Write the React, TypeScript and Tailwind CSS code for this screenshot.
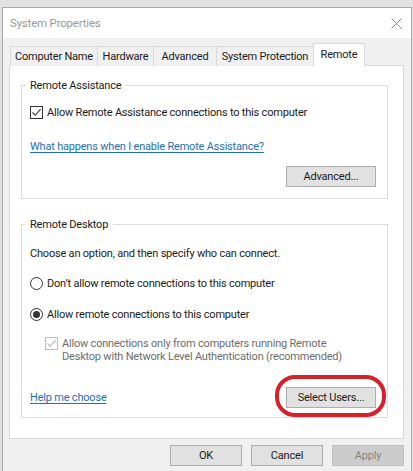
function CheckBox({ checked, disabled }: { checked?: boolean; disabled?: boolean }) {
  return (
    <span
      className={
        'flex items-center justify-center w-[13px] h-[13px] shrink-0 border bg-white ' +
        (disabled ? 'border-[#bcbcbc]' : 'border-[#333333]')
      }
    >
      {checked && (
        <svg width="11" height="11" viewBox="0 0 11 11">
          <path
            d="M1.5 5.5 L4.2 8.3 L9.6 2.2"
            fill="none"
            stroke={disabled ? '#b4b4b4' : '#333333'}
            strokeWidth="1.1"
          />
        </svg>
      )}
    </span>
  )
}

function Radio({ checked }: { checked?: boolean }) {
  return (
    <span className="flex items-center justify-center w-[13px] h-[13px] shrink-0 rounded-full border border-[#333333] bg-white">
      {checked && <span className="w-[7px] h-[7px] rounded-full bg-[#333333]" />}
    </span>
  )
}

function Button({ label, disabled, width = 'w-[90px]' }: { label: string; disabled?: boolean; width?: string }) {
  return (
    <div
      className={
        'h-[21px] flex items-center justify-center border ' +
        width +
        (disabled
          ? ' bg-[#cccccc] border-[#bfbfbf] text-[#838383]'
          : ' bg-[#e1e1e1] border-[#adadad] text-[#1a1a1a]')
      }
    >
      {label}
    </div>
  )
}

const tabs = [
  { label: 'Computer Name', w: 'w-[88px]' },
  { label: 'Hardware', w: 'w-[57px]' },
  { label: 'Advanced', w: 'w-[64px]' },
  { label: 'System Protection', w: 'w-[98px]' },
]

export default function App() {
  return (
    <div
      className="w-[413px] h-[471px] overflow-hidden bg-[#e2e2e2] pt-[7px] pl-[2px] pr-[1px] text-[11px] tracking-[-0.2px] leading-[15px] text-[#1a1a1a]"
      style={{ fontFamily: 'Roboto, "Liberation Sans", sans-serif' }}
    >
      <div className="h-full border-l border-r border-t border-[#a9a9a9] bg-[#f0f0f0] flex flex-col">
        {/* title bar */}
        <div className="h-[30px] bg-white flex items-center justify-between pl-[7px] pr-[9px]">
          <span className="text-[11.5px] text-[#9a9a9a]">System Properties</span>
          <svg width="11" height="11" viewBox="0 0 11 11">
            <path d="M0.5 0.5 L10.5 10.5 M10.5 0.5 L0.5 10.5" stroke="#8c8c8c" strokeWidth="1" />
          </svg>
        </div>

        {/* tabs + panel */}
        <div className="pt-[5px] pl-[6px] pr-[7px]">
          <div className="flex items-end h-[23px] pl-[1px] -mb-px relative z-10">
            {tabs.map((t) => (
              <div
                key={t.label}
                className={
                  'h-[20px] flex items-center justify-center border border-b-0 border-[#d9d9d9] -ml-px first:ml-0 bg-[#f0f0f0] ' +
                  t.w
                }
              >
                {t.label}
              </div>
            ))}
            <div className="h-[23px] w-[52px] -ml-px flex items-start justify-center pt-[3px] bg-white border border-b-0 border-[#d9d9d9]">
              Remote
            </div>
          </div>

          <div className="h-[374px] bg-white border border-[#d9d9d9]">
            {/* Remote Assistance */}
            <fieldset className="ml-[11px] mt-[12px] w-[367px] border border-[#dcdcdc] px-[8px] pb-[11px] flex flex-col">
              <legend className="-ml-[5px] px-[5px]">Remote Assistance</legend>
              <div className="mt-[12px] flex items-center gap-[4px]">
                <CheckBox checked />
                <span>Allow Remote Assistance connections to this computer</span>
              </div>
              <div className="mt-[19px]">
                <span className="text-[#1f6fb5] underline underline-offset-[2px]">
                  What happens when I enable Remote Assistance?
                </span>
              </div>
              <div className="mt-[12px] flex justify-end pr-[3px]">
                <Button label="Advanced..." />
              </div>
            </fieldset>

            {/* Remote Desktop */}
            <fieldset className="ml-[11px] mt-[18px] w-[367px] border border-[#dcdcdc] px-[8px] pb-[9px] flex flex-col">
              <legend className="-ml-[5px] px-[5px]">Remote Desktop</legend>
              <div className="mt-[14px]">Choose an option, and then specify who can connect.</div>
              <div className="mt-[15px] flex items-center gap-[4px]">
                <Radio />
                <span>Don’t allow remote connections to this computer</span>
              </div>
              <div className="mt-[16px] flex items-center gap-[4px]">
                <Radio checked />
                <span>Allow remote connections to this computer</span>
              </div>
              <div className="mt-[15px] ml-[15px] flex items-start gap-[4px] leading-[13px] text-[#6d6d6d]">
                <CheckBox checked disabled />
                <span>
                  Allow connections only from computers running Remote
                  <br />
                  Desktop with Network Level Authentication (recommended)
                </span>
              </div>
              <div className="mt-[24px] flex items-center justify-between pr-[3px]">
                <span className="text-[#1f6fb5] underline underline-offset-[2px]">Help me choose</span>
                <div className="relative">
                  <Button label="Select Users..." />
                  <span className="absolute -left-[11px] -top-[12px] -right-[10px] -bottom-[9px] rounded-[20px] border-[4px] border-[#d6202a]" />
                </div>
              </div>
            </fieldset>
          </div>
        </div>

        {/* bottom buttons */}
        <div className="mt-[6px] flex justify-end gap-[9px] pr-[7px]">
          <Button label="OK" width="w-[72px]" />
          <Button label="Cancel" width="w-[72px]" />
          <Button label="Apply" width="w-[72px]" disabled />
        </div>
      </div>
    </div>
  )
}
